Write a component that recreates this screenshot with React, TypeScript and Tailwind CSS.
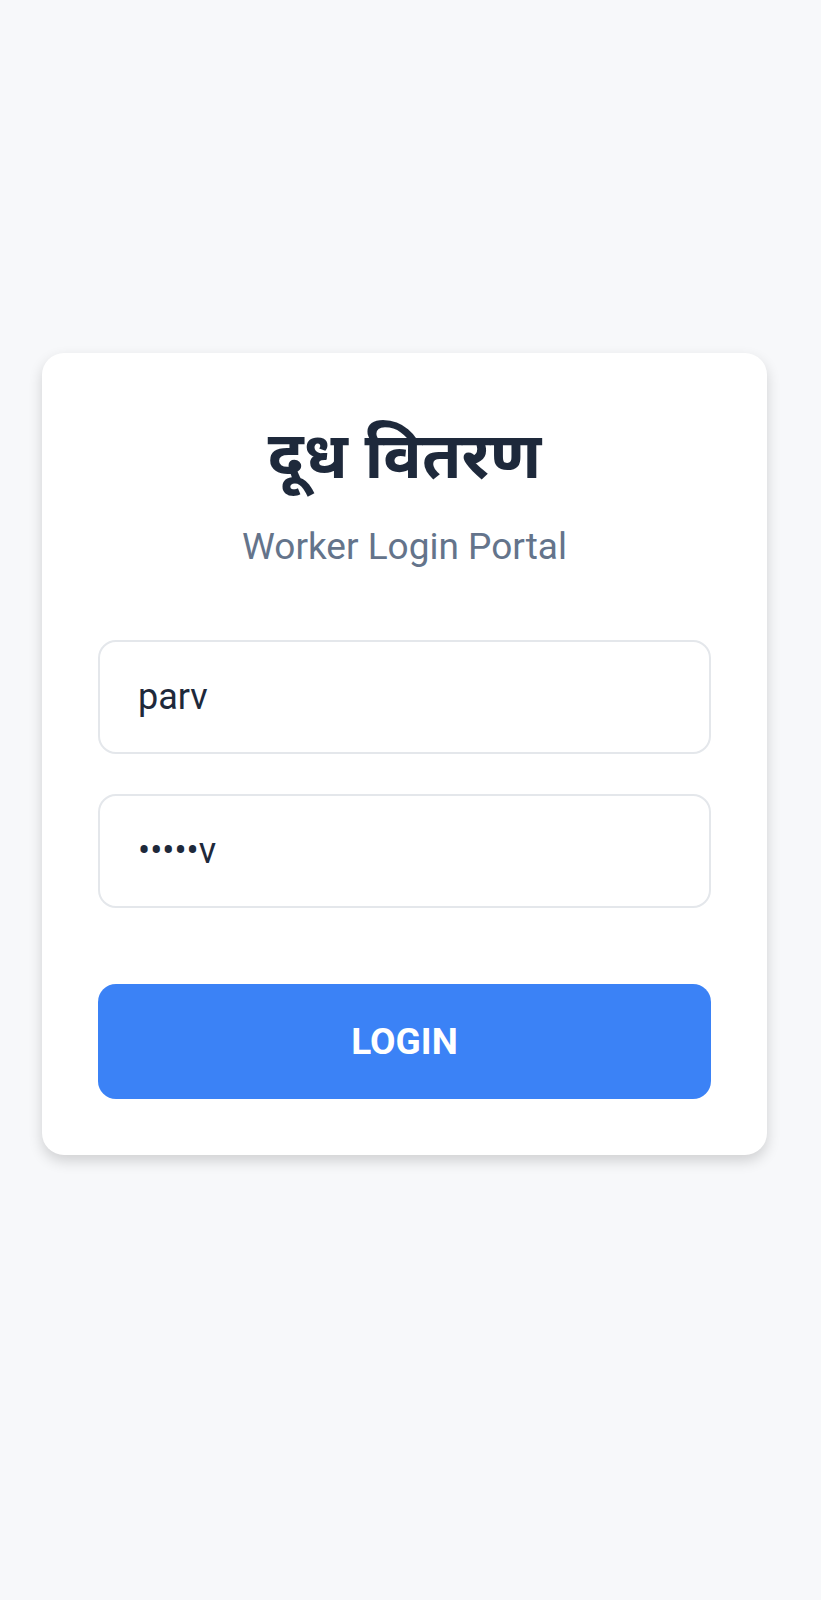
import React from "react";

export default function App() {
  return (
    <div className="min-h-[1600px] bg-[#f7f8fa] pt-[353px] px-[42px] font-['Roboto',sans-serif]">
      <div className="w-[725px] rounded-[22px] bg-white shadow-[0_6px_14px_rgba(0,0,0,0.16)] px-[56px] pt-[61px] pb-[56px]">
        <h1 className="text-center text-[64px] font-bold leading-[80px] text-[#1e293b] font-['Noto_Sans','Noto_Sans_Devanagari',sans-serif]">
          दूध वितरण
        </h1>
        <p className="mt-[31px] text-center text-[37px] leading-[44px] text-[#64748b]">
          Worker Login Portal
        </p>
        <div className="mt-[71px] flex flex-col gap-[40px]">
          <div className="flex h-[114px] items-center rounded-[18px] border-2 border-[#e4e7eb] px-[38px] text-[36px] text-[#1e293b]">
            parv
          </div>
          <div className="flex h-[114px] items-center rounded-[18px] border-2 border-[#e4e7eb] px-[38px] text-[36px] text-[#1e293b]">
            •••••v
          </div>
        </div>
        <button className="mt-[76px] flex h-[115px] w-full items-center justify-center rounded-[18px] bg-[#3b82f6] text-[37px] font-bold text-white">
          LOGIN
        </button>
      </div>
    </div>
  );
}
